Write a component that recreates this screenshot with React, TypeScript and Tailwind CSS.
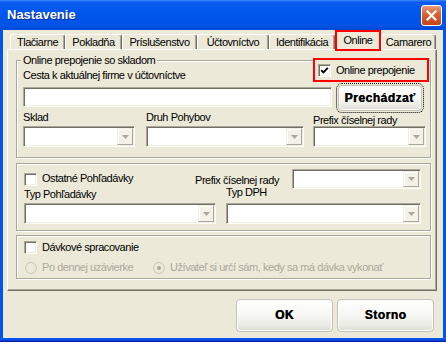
import React from "react";

const sunken =
  "border border-t-[#ACA899] border-l-[#ACA899] border-b-white border-r-white shadow-[inset_1px_1px_0_#716F64,inset_-1px_-1px_0_#F1EFE2] bg-white";
const etched =
  "border border-[#ACA899] shadow-[inset_1px_1px_0_#ffffff,1px_1px_0_#ffffff]";

function Checkbox({ checked, className = "" }: { checked?: boolean; className?: string }) {
  return (
    <div className={`w-[13px] h-[13px] shrink-0 flex items-center justify-center ${sunken} ${className}`}>
      {checked && (
        <svg width="9" height="9" viewBox="0 0 9 9">
          <polyline points="1.2,4.2 3.4,6.4 7.8,1.8" fill="none" stroke="#000" strokeWidth="1.9" />
        </svg>
      )}
    </div>
  );
}

function Radio({ checked, className = "" }: { checked?: boolean; className?: string }) {
  return (
    <svg width="12" height="12" viewBox="0 0 12 12" className={`shrink-0 ${className}`}>
      <circle cx="6" cy="6" r="5.5" fill="#ECE9D8" stroke="#C9C6B8" strokeWidth="1" />
      {checked && <circle cx="6" cy="6" r="2" fill="#ACA899" />}
    </svg>
  );
}

function Combo({ className = "" }: { className?: string }) {
  return (
    <div className={`${sunken} flex justify-end p-[1px] shrink-0 ${className}`}>
      <div className="w-[16px] h-full border border-t-[#F1EFE2] border-l-[#F1EFE2] border-b-[#ACA899] border-r-[#ACA899] shadow-[inset_1px_1px_0_#ffffff] bg-[#F3F1E8] flex items-center justify-center">
        <svg width="7" height="4" viewBox="0 0 7 4">
          <path d="M0 0h7L3.5 4z" fill="#ACA899" />
        </svg>
      </div>
    </div>
  );
}

function XPButton({ label, className = "" }: { label: string; className?: string }) {
  return (
    <div
      className={`rounded-[4px] border border-[#C4C2B8] shadow-[inset_0_0_0_1px_#ffffff] bg-[linear-gradient(to_bottom,#ffffff_0%,#F7F7F4_45%,#ECECE6_80%,#DCDCD4_100%)] flex items-center justify-center font-bold text-[12px] tracking-[0.5px] [text-shadow:0.4px_0_0_#000] ${className}`}
    >
      {label}
    </div>
  );
}

const tabs = [
  { label: "Tlačiarne", w: "w-[55px]" },
  { label: "Pokladňa", w: "w-[57px]" },
  { label: "Príslušenstvo", w: "w-[75px]" },
  { label: "Účtovníctvo", w: "w-[72px]" },
  { label: "Identifikácia", w: "w-[66px]" },
  { label: "Online", w: "w-[46px]", selected: true },
  { label: "Camarero", w: "w-[55px]" },
];

export default function App() {
  return (
    <div className="w-[446px] h-[342px] bg-[#0055EA] shadow-[inset_0_-1px_0_#0019A8,inset_0_-2px_0_#0842D0] flex flex-col font-['Liberation_Sans',Arial,sans-serif] text-[11px] leading-[13px] tracking-[-0.45px] text-black overflow-hidden">
      {/* Title bar */}
      <div className="h-[30px] shrink-0 flex items-center pl-[7px] pr-[4px] bg-[linear-gradient(to_bottom,#3A86F8_0%,#0A5CF0_8%,#0056EB_45%,#0053E4_85%,#0047D4_100%)]">
        <span className="text-white font-bold text-[13px] leading-[16px] tracking-normal [text-shadow:1px_1px_0_#0B2A9E]">
          Nastavenie
        </span>
        <div className="ml-auto w-[21px] h-[21px] rounded-[3px] border border-white bg-[linear-gradient(to_bottom,#E89A7E_0%,#D9602F_45%,#C5451A_100%)] flex items-center justify-center">
          <svg width="11" height="11" viewBox="0 0 11 11">
            <path d="M1.5 1.5L9.5 9.5M9.5 1.5L1.5 9.5" stroke="#ffffff" strokeWidth="2.2" strokeLinecap="square" />
          </svg>
        </div>
      </div>

      {/* Body */}
      <div className="flex-1 mx-[3px] mb-[4px] bg-[#ECE9D8] flex flex-col">
        {/* Tabs */}
        <div className="h-[19px] shrink-0 flex items-end ml-[7px]">
          {tabs.map((t) =>
            t.selected ? (
              <div
                key={t.label}
                className={`${t.w} h-[21px] -mb-[2px] relative z-10 border-2 border-[#FF0000] bg-[#ECE9D8] flex justify-center pt-[2px]`}
              >
                {t.label}
              </div>
            ) : (
              <div
                key={t.label}
                className={`${t.w} h-[15px] border-l border-t border-r border-l-white border-t-white border-r-[#716F64] rounded-t-[3px] shadow-[inset_-1px_0_0_#ACA899] flex justify-center pt-[1px]`}
              >
                {t.label}
              </div>
            )
          )}
        </div>

        {/* Panel */}
        <div className="ml-[4px] w-[430px] h-[242px] shrink-0 border border-l-white border-t-white border-r-[#716F64] border-b-[#716F64] shadow-[inset_-1px_-1px_0_#ACA899] flex flex-col pl-[8px]">
          {/* Group 1 */}
          <div className={`relative mt-[10px] w-[415px] h-[98px] shrink-0 ${etched} flex flex-col`}>
            <span className="absolute left-[4px] -top-[7px] px-[2px] bg-[#ECE9D8]">
              Online prepojenie so skladom
            </span>
            <div className="flex -mt-[3px] h-[24px]">
              <span className="ml-[6px] mt-[11px]">Cesta k aktuálnej firme v účtovníctve</span>
              <div className="ml-auto mr-[1px] w-[116px] h-[24px] border-2 border-[#FF0000] bg-[#ECE9D8] relative z-10 flex items-center pl-[3px]">
                <Checkbox checked />
                <span className="ml-[5px]">Online prepojenie</span>
              </div>
            </div>
            <div className="flex mt-[1px]">
              <div className={`ml-[6px] mt-[4px] w-[309px] h-[20px] ${sunken}`} />
              <div className="ml-[4px] w-[88px] h-[30px] rounded-[6px] border border-dotted border-black p-[1px]">
                <XPButton label="Prechádzať" className="w-full h-full" />
              </div>
            </div>
            <div className="flex items-end -mt-[2px]">
              <div className="ml-[6px] w-[112px] flex flex-col">
                <span className="leading-[12px] mb-[3px]">Sklad</span>
                <Combo className="w-full h-[21px]" />
              </div>
              <div className="ml-[11px] w-[158px] flex flex-col">
                <span className="leading-[12px] mb-[3px]">Druh Pohybov</span>
                <Combo className="w-full h-[21px]" />
              </div>
              <div className="ml-[9px] w-[113px] flex flex-col">
                <span className="leading-[12px]">Prefix číselnej rady</span>
                <Combo className="w-full h-[21px]" />
              </div>
            </div>
          </div>

          {/* Group 2 */}
          <div className={`mt-[5px] w-[415px] h-[68px] shrink-0 ${etched} flex flex-col`}>
            <div className="flex items-center mt-[5px] h-[20px]">
              <div className="w-[178px] flex items-center">
                <Checkbox className="ml-[7px]" />
                <span className="ml-[5px] -mt-[2px]">Ostatné Pohľadávky</span>
              </div>
              <span className="flex-1 mt-[2px]">Prefix číselnej rady</span>
              <Combo className="w-[129px] h-[20px] mr-[9px]" />
            </div>
            <div className="flex h-[14px]">
              <span className="ml-[7px] w-[192px] -mt-[1px]">Typ Pohľadávky</span>
              <span className="ml-[10px] -mt-[3px]">Typ DPH</span>
            </div>
            <div className="flex">
              <Combo className="ml-[7px] w-[192px] h-[21px]" />
              <Combo className="ml-[10px] w-[195px] h-[21px]" />
            </div>
          </div>

          {/* Group 3 */}
          <div className={`mt-[4px] w-[415px] h-[44px] shrink-0 ${etched} flex flex-col`}>
            <div className="flex items-center mt-[5px] h-[13px]">
              <Checkbox className="ml-[7px]" />
              <span className="ml-[5px]">Dávkové spracovanie</span>
            </div>
            <div className="flex items-center mt-[7px] h-[13px] text-[#ACA899]">
              <div className="w-[136px] flex items-center">
                <Radio className="ml-[8px]" />
                <span className="ml-[5px]">Po dennej uzávierke</span>
              </div>
              <Radio checked />
              <span className="ml-[5px]">Užívateľ si určí sám, kedy sa má dávka vykonať</span>
            </div>
          </div>
        </div>

        {/* Dialog buttons */}
        <div className="flex ml-[233px] mt-[8px] gap-[4px]">
          <XPButton label="OK" className="w-[97px] h-[33px]" />
          <XPButton label="Storno" className="w-[97px] h-[33px]" />
        </div>
      </div>
    </div>
  );
}
